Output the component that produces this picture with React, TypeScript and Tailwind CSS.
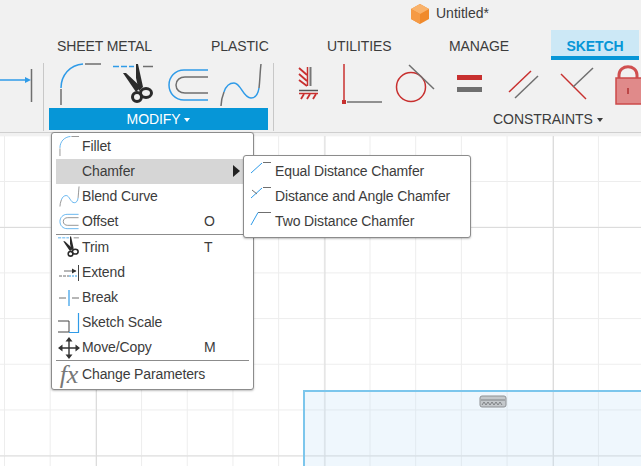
import type { ReactNode } from "react";

const BLUE = "#2f9be8";
const GRAY = "#6f6f6f";
const RED = "#c8302f";

function Scissors({ small }: { small?: boolean }) {
  // drawn in a 44x44 box, the menu uses it scaled down
  const s = small ? 23 : 44;
  return (
    <svg width={s} height={s} viewBox="0 0 44 44" fill="none">
      <path d="M0 3.500h21" stroke={BLUE} strokeWidth="1.5" strokeDasharray="6 2" />
      <path d="M30 3.500h10" stroke={GRAY} strokeWidth="1.5" />
      <path d="M23 1l2 0 5 23-4 4-3-13z" fill="#2b2b2b" />
      <path d="M10 10l3 0 15 14-5 5z" fill="#2b2b2b" />
      <circle cx="24" cy="34" r="4.500" stroke="#2b2b2b" strokeWidth="3" />
      <ellipse cx="33" cy="30" rx="5.500" ry="4.500" stroke="#2b2b2b" strokeWidth="3" />
    </svg>
  );
}

function Fillet({ size = 44 }: { size?: number }) {
  return (
    <svg width={size} height={size} viewBox="0 0 44 44" fill="none">
      <path d="M26 1h16M2 26v16" stroke={GRAY} strokeWidth="1.5" />
      <path d="M24 1C11 2 2 12 2 25" stroke={BLUE} strokeWidth="1.5" />
    </svg>
  );
}

function Offset({ size = 44 }: { size?: number }) {
  return (
    <svg width={size} height={size} viewBox="0 0 44 44" fill="none">
      <path d="M41 7H17C8 7 2 14 2 22s6 15 15 15h24" stroke={BLUE} strokeWidth="1.5" />
      <path d="M41 14H18c-5 0-9 3-9 8s4 8 9 8h23" stroke={GRAY} strokeWidth="1.5" />
    </svg>
  );
}

function Blend({ size = 44 }: { size?: number }) {
  return (
    <svg width={size} height={size} viewBox="0 0 44 44" fill="none">
      <path d="M2 43c0-4 1-9 3-14" stroke={GRAY} strokeWidth="1.5" />
      <path d="M5 29c2-6 6-9 10-9 7 0 9 15 17 15 5 0 7-4 8-10" stroke={BLUE} strokeWidth="1.5" />
      <path d="M40 25c1-8 1-16 2-24" stroke={GRAY} strokeWidth="1.5" />
    </svg>
  );
}

function SmallChamfer({ kind }: { kind: "equal" | "angle" | "two" }) {
  return (
    <svg width="22" height="20" viewBox="0 0 22 20" fill="none" className={kind === "two" ? "mt-[1px]" : ""}>
      {kind === "two" ? <path d="M8 .5h13" stroke={GRAY} /> : <path d="M13 .5h8" stroke={GRAY} />}
      <path d={kind === "two" ? "M1 13L8 .5" : "M1 11L12 1"} stroke={BLUE} />
      {kind === "angle" && <path d="M2 3l5 4" stroke={GRAY} />}
    </svg>
  );
}

const MENU_ICONS: Record<string, ReactNode> = {
  fillet: <Fillet size={21} />,
  blend: <Blend size={21} />,
  offset: <Offset size={21} />,
  trim: <Scissors small />,
  extend: (
    <svg width="22" height="22" viewBox="0 0 22 22" fill="none">
      <path d="M1 14h10" stroke={GRAY} strokeDasharray="3 1" />
      <path d="M6 9h12" stroke={GRAY} />
      <path d="M14 6.500l4.500 2.500-4.500 2.500z" fill="#333" />
      <path d="M11 14h8" stroke={BLUE} strokeDasharray="2 1" />
      <path d="M20.500 3v16" stroke="#444" />
    </svg>
  ),
  break: (
    <svg width="22" height="22" viewBox="0 0 22 22" fill="none">
      <path d="M1 11h7M14 11h7" stroke={GRAY} />
      <path d="M11 3v16" stroke={BLUE} strokeWidth="1.2" />
    </svg>
  ),
  scale: (
    <svg width="22" height="22" viewBox="0 0 22 22" fill="none">
      <path d="M0 9h11v11H0" stroke="#444" />
      <path d="M11 20.500h9.500V1" stroke={BLUE} strokeWidth="1.2" />
    </svg>
  ),
  move: (
    <svg width="22" height="22" viewBox="0 0 22 22" fill="none">
      <path d="M11 2v18M2 11h18" stroke="#333" strokeWidth="1.4" />
      <path d="M11 0l3.500 4.500h-7zM11 22l3.500-4.500h-7zM0 11l4.500-3.500v7zM22 11l-4.500-3.500v7z" fill="#333" />
    </svg>
  ),
};

function MenuRow({ icon, label, shortcut, active }: { icon?: string; label: string; shortcut?: string; active?: boolean }) {
  return (
    <div className={`flex h-[25px] w-[187px] items-center ${active ? "bg-[#d6d6d6]" : ""}`}>
      <span className="flex w-[26px] shrink-0 justify-center">{icon ? MENU_ICONS[icon] : null}</span>
      <span className="w-[122px] shrink-0">{label}</span>
      {shortcut && <span>{shortcut}</span>}
    </div>
  );
}

function SubRow({ kind, label }: { kind: "equal" | "angle" | "two"; label: string }) {
  return (
    <div className="flex h-[25px] items-center">
      <span className="flex w-[31px] shrink-0 pl-[6px]">
        <SmallChamfer kind={kind} />
      </span>
      <span>{label}</span>
    </div>
  );
}

function ConstraintIcons() {
  return (
    <svg width="368" height="44" viewBox="0 0 368 44" fill="none" className="shrink-0">
      {/* fix */}
      <path d="M9.500 3v19" stroke={RED} strokeWidth="1.5" />
      <path d="M12.500 3v19" stroke="#777" strokeWidth="2" />
      <path d="M1 4l8 7M1 10l8 7M1 16l8 6" stroke={RED} strokeWidth="1.8" />
      <path d="M1 26.500h19" stroke="#555" strokeWidth="1.5" />
      <path d="M1 29.500h19" stroke={RED} strokeWidth="1.5" />
      <path d="M3 35l3-5M9 35l3-5M15 35l3-5" stroke={RED} strokeWidth="1.8" />
      {/* coincident */}
      <path d="M46 0v37" stroke={RED} strokeWidth="1.5" />
      <rect x="44" y="36" width="4" height="4" fill={RED} />
      <path d="M49 38h35" stroke={GRAY} strokeWidth="1.5" />
      {/* tangent */}
      <circle cx="113" cy="23" r="14.500" stroke={RED} strokeWidth="1.5" />
      <path d="M111 1l25 24" stroke={GRAY} strokeWidth="1.5" />
      {/* equal */}
      <rect x="159" y="11" width="25" height="5" fill={RED} />
      <rect x="159" y="23" width="25" height="5" fill={GRAY} />
      {/* parallel */}
      <path d="M211 28l22-21" stroke={RED} strokeWidth="1.5" />
      <path d="M217 34l23-22" stroke={GRAY} strokeWidth="1.5" />
      {/* perpendicular */}
      <path d="M263 10l25 25" stroke={RED} strokeWidth="1.5" />
      <path d="M275 23l20-19" stroke={GRAY} strokeWidth="1.5" />
      {/* lock */}
      <path d="M321 14V11c0-11 18-11 18 0v3" stroke="#d05050" strokeWidth="3" />
      <rect x="318" y="14" width="30" height="26" fill="#e08a8a" stroke="#cc4a4a" strokeWidth="1.5" />
      <path d="M330 24v6" stroke="#b03030" strokeWidth="1.5" />
    </svg>
  );
}

export default function App() {
  return (
    <div className="relative flex h-[466px] w-[641px] flex-col overflow-hidden bg-white font-['Liberation_Sans',Arial,sans-serif] text-[#3c3c3c]">
      <header className="h-[133px] shrink-0 border-b border-[#cfcfcf] bg-[#f1f1f1]">
        <div className="flex h-[30px] items-center pb-[3px] pl-[411px]">
          <svg width="18" height="20" viewBox="0 0 18 20">
            <path d="M9 0l9 5v10l-9 5-9-5V5z" fill="#f08a2c" />
            <path d="M9 0l9 5-9 5-9-5z" fill="#f9b26b" />
            <path d="M0 5l9 5v10l-9-5z" fill="#f59a45" />
          </svg>
          <span className="ml-[7px] text-[14px]">Untitled*</span>
        </div>
        <div className="flex h-[30px] text-[14px] tracking-[-0.1px]">
          <span className="ml-[57px] w-[154px] pt-[6px]">SHEET METAL</span>
          <span className="w-[116px] pt-[6px]">PLASTIC</span>
          <span className="w-[122px] pt-[6px]">UTILITIES</span>
          <span className="w-[102px] pt-[6px]">MANAGE</span>
          <span className="h-[30px] w-[88px] border-b-[4px] border-[#0696d7] bg-[#cce8f6] pt-[6px] text-center font-bold text-[#0696d7]">
            SKETCH
          </span>
        </div>
        <div className="flex h-[72px]">
          <div className="mb-[1px] mt-[3px] flex w-[44px] shrink-0 border-r border-[#c8c8c8] pt-[3px]">
            <svg width="33" height="36" viewBox="0 0 33 36" fill="none">
              <path d="M0 14h28" stroke={BLUE} strokeWidth="1.5" />
              <path d="M25 11l6 3-6 3z" fill={BLUE} />
              <path d="M31.500 3v34" stroke={GRAY} strokeWidth="1.5" />
            </svg>
          </div>
          <div className="ml-[5px] flex w-[219px] shrink-0 flex-col">
            <div className="flex h-[48px] items-start pl-[10px] pt-[3px]">
              <Fillet />
              <span className="ml-[10px]">
                <Scissors />
              </span>
              <span className="ml-[10px]">
                <Offset />
              </span>
              <span className="ml-[8px]">
                <Blend />
              </span>
            </div>
            <div className="flex h-[22px] items-center justify-center gap-[4px] bg-[#0696d7] text-[14px] tracking-[-0.1px] text-white">
              MODIFY
              <span className="mt-[1px] border-x-[3px] border-t-[4px] border-x-transparent border-t-white" />
            </div>
          </div>
          <div className="mb-[1px] ml-[5px] mt-[3px] flex w-[368px] shrink-0 flex-col border-l border-[#c8c8c8]">
            <div className="h-[45px] pl-[24px] pt-[1px]">
              <ConstraintIcons />
            </div>
            <div className="mt-[1px] flex items-center gap-[4px] pl-[219px] text-[14px] tracking-[-0.05px]">
              CONSTRAINTS
              <span className="mt-[1px] border-x-[3px] border-t-[4px] border-x-transparent border-t-[#3c3c3c]" />
            </div>
          </div>
        </div>
      </header>

      <main className="relative flex-1 border-t-[3px] border-[#f1f1f1] bg-[linear-gradient(to_right,#dcdcdc_1px,transparent_1px),linear-gradient(to_bottom,#dcdcdc_1px,transparent_1px),linear-gradient(to_right,#ededed_1px,transparent_1px),linear-gradient(to_bottom,#ededed_1px,transparent_1px)] bg-[size:228.5px_100%,100%_228.5px,45.7px_100%,100%_45.7px] bg-[position:96px_0,0_91px,4px_0,0_45px]">
        {/* sketch profile */}
        <div className="absolute left-[303px] top-[254px] h-[90px] w-[400px] border-2 border-[#7cc6ec] bg-[#bfe0f7]/25">
          <svg width="28" height="13" viewBox="0 0 28 13" fill="none" className="absolute left-[174px] top-[3px]">
            <rect x="1" y="1" width="26" height="11" rx="2" fill="#c4c8cb" stroke="#8e9194" />
            <path d="M2 5h24" stroke="#7f8285" />
            <path d="M3 10l2-3 2 3 2-3 2 3 2-3 2 3 2-3 2 3 2-3 2 3" stroke="#7f8285" />
          </svg>
        </div>

        {/* modify menu */}
        <div className="absolute left-[51px] top-[-4px] h-[258px] w-[203px] rounded-[3px] border border-[#8c8c8c] bg-white text-[14px] tracking-[-0.12px] shadow-[0_1px_2px_rgba(0,0,0,0.25)]">
          <div className="pl-[4px] pt-[1px]">
            <MenuRow icon="fillet" label="Fillet" />
            <div className="relative">
              <MenuRow label="Chamfer" active />
              <span className="absolute left-[177px] top-[6px] border-y-[6px] border-l-[7px] border-y-transparent border-l-[#222]" />
            </div>
            <MenuRow icon="blend" label="Blend Curve" />
            <MenuRow icon="offset" label="Offset" shortcut="O" />
            <div className="h-px w-[194px] bg-[#8c8c8c]" />
            <MenuRow icon="trim" label="Trim" shortcut="T" />
            <MenuRow icon="extend" label="Extend" />
            <MenuRow icon="break" label="Break" />
            <MenuRow icon="scale" label="Sketch Scale" />
            <MenuRow icon="move" label="Move/Copy" shortcut="M" />
            <div className="h-px w-[193px] bg-[#8c8c8c]" />
            <div className="flex h-[27px] items-center">
              <span className="w-[26px] shrink-0 text-center font-['Liberation_Serif',serif] text-[26px] italic leading-none text-[#777]">fx</span>
              <span>Change Parameters</span>
            </div>
          </div>
        </div>

        {/* chamfer submenu */}
        <div className="absolute left-[243px] top-[19px] h-[83px] w-[228px] rounded-[3px] border border-[#8c8c8c] bg-white pt-[3px] text-[14px] tracking-[-0.12px] shadow-[0_1px_2px_rgba(0,0,0,0.25)]">
          <SubRow kind="equal" label="Equal Distance Chamfer" />
          <SubRow kind="angle" label="Distance and Angle Chamfer" />
          <SubRow kind="two" label="Two Distance Chamfer" />
        </div>
      </main>
    </div>
  );
}
